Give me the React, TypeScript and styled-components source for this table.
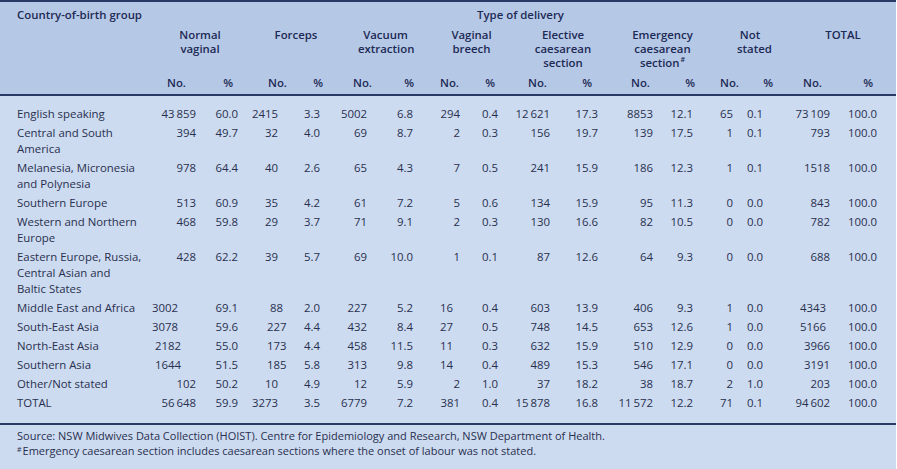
import React from "react";
import styled, { createGlobalStyle } from "styled-components";

const GlobalStyle = createGlobalStyle`
  html, body { margin: 0; padding: 0; background: #ffffff; }
  body { font-family: "Open Sans", "Liberation Sans", sans-serif; }
`;

const COLS =
  "150px 46px 42px 40px 42px 47px 46px 47px 38px 52px 48px 55px 40px 40px 30px 67px 47px 19px";

const NAVY = "#2a3a66";

const Frame = styled.div`
  width: 896px;
  height: 469px;
  background: #cddbf0;
  overflow: hidden;
  font-size: 11.4px;
  color: #28304f;
`;

const Header = styled.div`
  display: grid;
  grid-template-columns: ${COLS};
  background: #b5c8e6;
  border-top: 2px solid ${NAVY};
  border-bottom: 2px solid ${NAVY};
  padding: 6px 0 4px;
  line-height: 14px;
  font-weight: 600;
  color: #1d2a55;
`;

const CountryHead = styled.div`
  grid-row: 1;
  grid-column: 1 / 2;
  padding-left: 17px;
  white-space: nowrap;
`;

const TypeHead = styled.div<{ $shift: number }>`
  grid-row: 1;
  grid-column: 2 / 18;
  text-align: center;
  padding-left: ${(p) => p.$shift}px;
`;

const GroupHead = styled.div<{ $col: number; $shift: number }>`
  grid-row: 2;
  grid-column: ${(p) => p.$col} / span 2;
  margin-top: 6px;
  text-align: center;
  padding-left: ${(p) => p.$shift}px;
  white-space: pre-line;
  height: 42px;
`;

const Sup = styled.span`
  display: inline-block;
  font-size: 7px;
  line-height: 7px;
  vertical-align: top;
  margin-left: 1px;
`;

const SubNo = styled.div<{ $col: number; $left: number }>`
  grid-row: 3;
  grid-column: ${(p) => p.$col};
  margin-top: 6px;
  padding-left: ${(p) => p.$left}px;
  white-space: nowrap;
`;

const SubPct = styled.div<{ $col: number; $right: number }>`
  grid-row: 3;
  grid-column: ${(p) => p.$col};
  margin-top: 6px;
  text-align: right;
  margin-right: ${(p) => p.$right}px;
`;

const Body = styled.div`
  display: grid;
  grid-template-columns: ${COLS};
  padding: 8.5px 0 10.5px;
  line-height: 16px;
`;

const LabelCell = styled.div`
  grid-column: 1;
  padding: 1.5px 0 1.5px 17px;
  white-space: pre-line;
`;

const NumCell = styled.div<{ $left?: number }>`
  padding: 1.5px 0 1.5px ${(p) => (p.$left === undefined ? 0 : p.$left)}px;
  text-align: ${(p) => (p.$left === undefined ? "right" : "left")};
  white-space: nowrap;
`;

const EndCell = styled.div``;

const Footer = styled.div`
  border-top: 2px solid ${NAVY};
  padding: 4px 17px;
  line-height: 14px;
  font-size: 11px;
  white-space: nowrap;
`;

const FootSup = styled.span`
  font-size: 7px;
  vertical-align: 3px;
  margin-right: 1px;
`;

const groups: { label: React.ReactNode; shift: number }[] = [
  { label: "Normal\nvaginal", shift: 12 },
  { label: "Forceps", shift: 34 },
  { label: "Vacuum\nextraction", shift: 38 },
  { label: "Vaginal\nbreech", shift: 32 },
  { label: "Elective\ncaesarean\nsection", shift: 30 },
  {
    label: (
      <>
        {"Emergency\ncaesarean\nsection"}
        <Sup>#</Sup>
      </>
    ),
    shift: 34,
  },
  { label: "Not\nstated", shift: 44 },
  { label: "TOTAL", shift: 46 },
];

const noLeft = [17, 30, 33, 27, 30, 33, 27, 40];
const pctRight = [5, -3, -1, 3, 6, -2, -10, 4];

const T = "\u2009";

const rows: string[][] = [
  ["English speaking", `43${T}859`, "60.0", "2415", "3.3", "5002", "6.8", "294", "0.4", `12${T}621`, "17.3", "8853", "12.1", "65", "0.1", `73${T}109`, "100.0"],
  ["Central and South\nAmerica", "394", "49.7", "32", "4.0", "69", "8.7", "2", "0.3", "156", "19.7", "139", "17.5", "1", "0.1", "793", "100.0"],
  ["Melanesia, Micronesia\nand Polynesia", "978", "64.4", "40", "2.6", "65", "4.3", "7", "0.5", "241", "15.9", "186", "12.3", "1", "0.1", "1518", "100.0"],
  ["Southern Europe", "513", "60.9", "35", "4.2", "61", "7.2", "5", "0.6", "134", "15.9", "95", "11.3", "0", "0.0", "843", "100.0"],
  ["Western and Northern\nEurope", "468", "59.8", "29", "3.7", "71", "9.1", "2", "0.3", "130", "16.6", "82", "10.5", "0", "0.0", "782", "100.0"],
  ["Eastern Europe, Russia,\nCentral Asian and\nBaltic States", "428", "62.2", "39", "5.7", "69", "10.0", "1", "0.1", "87", "12.6", "64", "9.3", "0", "0.0", "688", "100.0"],
  ["Middle East and Africa", "3002", "69.1", "88", "2.0", "227", "5.2", "16", "0.4", "603", "13.9", "406", "9.3", "1", "0.0", "4343", "100.0"],
  ["South-East Asia", "3078", "59.6", "227", "4.4", "432", "8.4", "27", "0.5", "748", "14.5", "653", "12.6", "1", "0.0", "5166", "100.0"],
  ["North-East Asia", "2182", "55.0", "173", "4.4", "458", "11.5", "11", "0.3", "632", "15.9", "510", "12.9", "0", "0.0", "3966", "100.0"],
  ["Southern Asia", "1644", "51.5", "185", "5.8", "313", "9.8", "14", "0.4", "489", "15.3", "546", "17.1", "0", "0.0", "3191", "100.0"],
  ["Other/Not stated", "102", "50.2", "10", "4.9", "12", "5.9", "2", "1.0", "37", "18.2", "38", "18.7", "2", "1.0", "203", "100.0"],
  ["TOTAL", `56${T}648`, "59.9", "3273", "3.5", "6779", "7.2", "381", "0.4", `15${T}878`, "16.8", `11${T}572`, "12.2", "71", "0.1", `94${T}602`, "100.0"],
];

// Cells that the source sets flush-left at a fixed offset (row index-number column index -> px)
const leftSet: Record<string, number> = {
  "6-0": 2,
  "7-0": 2,
  "8-0": 5,
  "9-0": 5,
  "6-2": 32,
  "7-2": 29,
  "8-2": 29,
  "9-2": 29,
  "6-6": 27,
  "7-6": 27,
  "8-6": 27,
  "9-6": 27,
  "6-14": 37,
  "7-14": 37,
};

export default function App() {
  return (
    <>
      <GlobalStyle />
      <Frame>
        <Header>
          <CountryHead>Country-of-birth group</CountryHead>
          <TypeHead $shift={14}>Type of delivery</TypeHead>
          {groups.map((g, i) => (
            <GroupHead key={i} $col={2 + i * 2} $shift={g.shift}>
              {g.label}
            </GroupHead>
          ))}
          {groups.map((_, i) => (
            <React.Fragment key={i}>
              <SubNo $col={2 + i * 2} $left={noLeft[i]}>
                No.
              </SubNo>
              <SubPct $col={3 + i * 2} $right={pctRight[i]}>
                %
              </SubPct>
            </React.Fragment>
          ))}
        </Header>
        <Body>
          {rows.map((r, ri) => (
            <React.Fragment key={ri}>
              <LabelCell>{r[0]}</LabelCell>
              {r.slice(1).map((v, ci) => (
                <NumCell key={ci} $left={leftSet[`${ri}-${ci}`]}>
                  {v}
                </NumCell>
              ))}
              <EndCell />
            </React.Fragment>
          ))}
        </Body>
        <Footer>
          Source: NSW Midwives Data Collection (HOIST). Centre for Epidemiology and Research, NSW
          Department of Health.
          <br />
          <FootSup>#</FootSup>Emergency caesarean section includes caesarean sections where the onset
          of labour was not stated.
        </Footer>
      </Frame>
    </>
  );
}
